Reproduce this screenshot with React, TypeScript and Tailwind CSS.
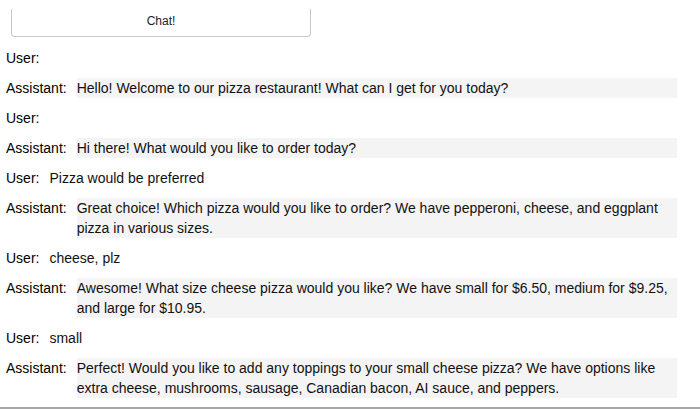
import React from "react";

type Msg = { role: "User" | "Assistant"; text: string };

const msgs: Msg[] = [
  { role: "User", text: "" },
  { role: "Assistant", text: "Hello! Welcome to our pizza restaurant! What can I get for you today?" },
  { role: "User", text: "" },
  { role: "Assistant", text: "Hi there! What would you like to order today?" },
  { role: "User", text: "Pizza would be preferred" },
  { role: "Assistant", text: "Great choice! Which pizza would you like to order? We have pepperoni, cheese, and eggplant pizza in various sizes." },
  { role: "User", text: "cheese, plz" },
  { role: "Assistant", text: "Awesome! What size cheese pizza would you like? We have small for $6.50, medium for $9.25, and large for $10.95." },
  { role: "User", text: "small" },
  { role: "Assistant", text: "Perfect! Would you like to add any toppings to your small cheese pizza? We have options like extra cheese, mushrooms, sausage, Canadian bacon, AI sauce, and peppers." },
];

export default function App() {
  return (
    <div className="w-[700px] h-[410px] overflow-hidden bg-white font-['Liberation_Sans',Arial,sans-serif] text-[14px] leading-[20px] text-black">
      <div className="pl-[11px] pt-[9px]">
        <div className="w-[300px] h-[28px] border-x border-b border-[#c8c8c8] rounded-b-[4px] flex justify-center pt-[4px] text-[12px] leading-[16px] text-[#222]">
          Chat!
        </div>
      </div>
      <div className="mt-[11px] flex flex-col gap-[10px]">
        {msgs.map((m, i) => (
          <div key={i} className="flex pl-[6px] pr-[23px]">
            <div className="shrink-0 mr-[10px]">{m.role}:</div>
            <div className={m.role === "Assistant" ? "flex-1 bg-[#f4f4f4] text-[#111]" : "flex-1 text-[#111]"}>
              {m.text}
            </div>
          </div>
        ))}
      </div>
      <div className="mt-[9px] h-[2px] bg-[#a8a8a8]" />
    </div>
  );
}
